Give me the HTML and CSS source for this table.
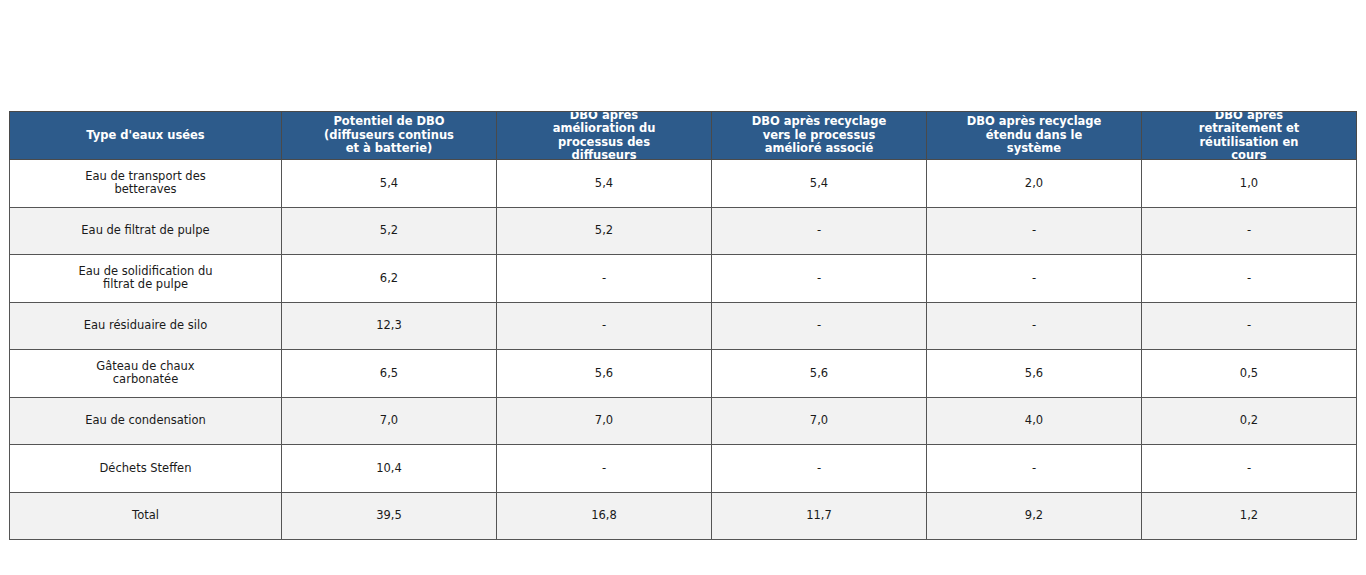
FILE: index.html
```html
<!DOCTYPE html>
<html lang="fr">
<head>
<meta charset="utf-8">
<title>DBO</title>
<link rel="stylesheet" href="styles.css">
</head>
<body>
<div class="page">
<table class="tbl">
<colgroup>
<col class="c1"><col class="cn"><col class="cn"><col class="cn"><col class="cn"><col class="cn">
</colgroup>
<thead>
<tr>
<th><div class="hc">Type d'eaux usées</div></th>
<th><div class="hc">Potentiel de DBO<br>(diffuseurs continus<br>et à batterie)</div></th>
<th><div class="hc">DBO après<br>amélioration du<br>processus des<br>diffuseurs</div></th>
<th><div class="hc">DBO après recyclage<br>vers le processus<br>amélioré associé</div></th>
<th><div class="hc">DBO après recyclage<br>étendu dans le<br>système</div></th>
<th><div class="hc">DBO après<br>retraitement et<br>réutilisation en<br>cours</div></th>
</tr>
</thead>
<tbody>
<tr><td>Eau de transport des<br>betteraves</td><td>5,4</td><td>5,4</td><td>5,4</td><td>2,0</td><td>1,0</td></tr>
<tr class="alt"><td>Eau de filtrat de pulpe</td><td>5,2</td><td>5,2</td><td>-</td><td>-</td><td>-</td></tr>
<tr><td>Eau de solidification du<br>filtrat de pulpe</td><td>6,2</td><td>-</td><td>-</td><td>-</td><td>-</td></tr>
<tr class="alt"><td>Eau résiduaire de silo</td><td>12,3</td><td>-</td><td>-</td><td>-</td><td>-</td></tr>
<tr><td>Gâteau de chaux<br>carbonatée</td><td>6,5</td><td>5,6</td><td>5,6</td><td>5,6</td><td>0,5</td></tr>
<tr class="alt"><td>Eau de condensation</td><td>7,0</td><td>7,0</td><td>7,0</td><td>4,0</td><td>0,2</td></tr>
<tr><td>Déchets Steffen</td><td>10,4</td><td>-</td><td>-</td><td>-</td><td>-</td></tr>
<tr class="alt"><td>Total</td><td>39,5</td><td>16,8</td><td>11,7</td><td>9,2</td><td>1,2</td></tr>
</tbody>
</table>
</div>
</body>
</html>
```
FILE: styles.css
```css
html, body {
  margin: 0;
  padding: 0;
  background: #ffffff;
}
.page {
  padding: 111px 0 0 9px;
}
.tbl {
  border-collapse: collapse;
  table-layout: fixed;
  width: 1348px;
  font-family: "DejaVu Sans", sans-serif;
  font-size: 11.5px;
  color: #1a1a1a;
}
.c1 { width: 272px; }
.cn { width: 215px; }
.tbl th {
  background: #2d5b8b;
  color: #ffffff;
  font-weight: bold;
  border: 1px solid #4a4a4a;
  padding: 0;
  height: 47px;
}
.hc {
  height: 47px;
  overflow: hidden;
  display: flex;
  align-items: center;
  justify-content: center;
  text-align: center;
  line-height: 13.5px;
}
.tbl td {
  border: 1px solid #555555;
  padding: 0;
  height: 46.5px;
  text-align: center;
  vertical-align: middle;
  line-height: 13.5px;
  background: #ffffff;
}
.tbl tr.alt td {
  background: #f2f2f2;
}
```
